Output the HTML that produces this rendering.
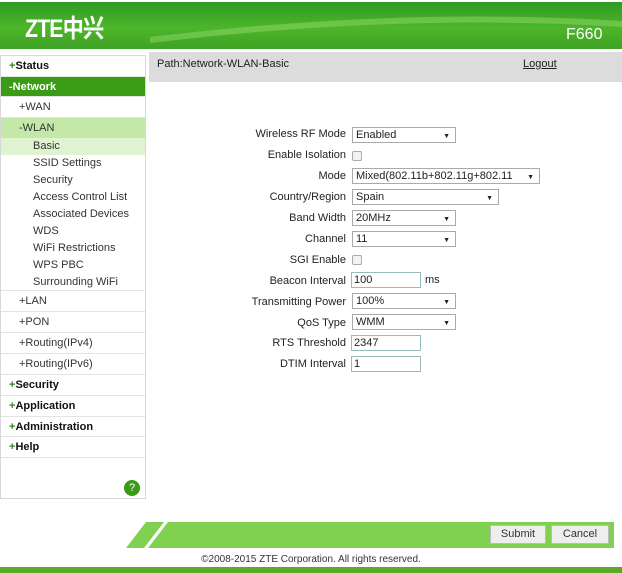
<!DOCTYPE html>
<html><head><style>
*{margin:0;padding:0;box-sizing:border-box}
body{width:622px;height:573px;background:#fff;font-family:"Liberation Sans",Arial,sans-serif;font-size:11px;color:#222;position:relative;overflow:hidden}
.a{position:absolute}
#hdr{left:0;top:2px;width:622px;height:47px;background:linear-gradient(180deg,#2f9a22 0%,#4db52a 55%,#3ea224 100%)}
#side{left:0;top:55px;width:146px;height:444px;border:1px solid #d8d8d8;background:#fff}
.it{position:absolute;left:0;width:144px;border-bottom:1px solid #e4e4e4;white-space:nowrap}
.l1{font-weight:bold;font-size:11px;padding-left:8px;color:#111}
.l1 b{color:#2c8a1a}
.l2{padding-left:18px;color:#333}
.l3{padding-left:32px;color:#333;border-bottom:none}
.lbl{position:absolute;right:276px;text-align:right;white-space:nowrap;color:#222}
.sel{position:absolute;left:352px;height:16px;border:1px solid #aaa;background:#fff;padding-left:3px;line-height:15px;font-size:11px}
.sel:after{content:"▼";position:absolute;right:5px;top:1px;font-size:7px}
.inp{position:absolute;left:351px;width:70px;height:16px;border:1px solid #9bb;padding-left:2px;line-height:14px}
.cb{position:absolute;left:352px;width:10px;height:10px;border:1px solid #aaa;border-radius:2px;background:#f4f4f4}
.btn{position:absolute;top:525px;height:19px;border:1px solid #bbb;background:#eee;text-align:center;line-height:17px;color:#333}
</style></head><body>
<div class="a" id="hdr">
<svg width="622" height="47" class="a" style="left:0;top:0"><path d="M150 38 Q400 8 622 22" stroke="#8fd86a" stroke-width="6" fill="none" opacity=".5"/></svg>
<div class="a" style="left:25px;top:7px;color:#fff;font-size:25px;font-weight:bold;font-family:'Liberation Sans','Noto Sans CJK SC',sans-serif;letter-spacing:-1px;transform:scaleX(.85);transform-origin:left">ZTE中兴</div>
<div class="a" style="left:566px;top:24px;color:#fff;font-size:16px">F660</div>
</div>
<div class="a" id="side">
<div class="it l1" style="top:0;height:21px;line-height:20px"><b>+</b>Status</div>
<div class="it l1" style="top:21px;height:20px;line-height:20px;background:#3a9b16;color:#fff">-Network</div>
<div class="it l2" style="top:41px;height:21px;line-height:20px">+WAN</div>
<div class="it l2" style="top:62px;height:20px;line-height:20px;background:#c4e8a8;border:none">-WLAN</div>
<div class="it l3" style="top:82px;height:17px;line-height:17px;background:#dff3d0">Basic</div>
<div class="it l3" style="top:99px;height:17px;line-height:17px">SSID Settings</div>
<div class="it l3" style="top:116px;height:17px;line-height:17px">Security</div>
<div class="it l3" style="top:133px;height:17px;line-height:17px">Access Control List</div>
<div class="it l3" style="top:150px;height:17px;line-height:17px">Associated Devices</div>
<div class="it l3" style="top:167px;height:17px;line-height:17px">WDS</div>
<div class="it l3" style="top:184px;height:17px;line-height:17px">WiFi Restrictions</div>
<div class="it l3" style="top:201px;height:17px;line-height:17px">WPS PBC</div>
<div class="it l3" style="top:218px;height:17px;line-height:17px;border-bottom:1px solid #e4e4e4">Surrounding WiFi</div>
<div class="it l2" style="top:235px;height:21px;line-height:20px">+LAN</div>
<div class="it l2" style="top:256px;height:21px;line-height:20px">+PON</div>
<div class="it l2" style="top:277px;height:21px;line-height:20px">+Routing(IPv4)</div>
<div class="it l2" style="top:298px;height:21px;line-height:20px">+Routing(IPv6)</div>
<div class="it l1" style="top:319px;height:21px;line-height:20px"><b>+</b>Security</div>
<div class="it l1" style="top:340px;height:21px;line-height:20px"><b>+</b>Application</div>
<div class="it l1" style="top:361px;height:20px;line-height:20px"><b>+</b>Administration</div>
<div class="it l1" style="top:381px;height:21px;line-height:20px"><b>+</b>Help</div>
<div class="a" style="left:123px;top:424px;width:16px;height:16px;border-radius:50%;background:#3a9a1a;color:#fff;text-align:center;line-height:16px;font-size:11px">?</div>
</div>
<div class="a" style="left:149px;top:52px;width:473px;height:30px;background:#dcdcdc"></div>
<div class="a" style="left:157px;top:58px">Path:Network-WLAN-Basic</div>
<div class="a" style="left:523px;top:58px;text-decoration:underline">Logout</div>

<div class="lbl" style="top:128px">Wireless RF Mode</div><div class="sel" style="top:127px;width:104px">Enabled</div>
<div class="lbl" style="top:149px">Enable Isolation</div><div class="cb" style="top:151px"></div>
<div class="lbl" style="top:170px">Mode</div><div class="sel" style="top:168px;width:188px">Mixed(802.11b+802.11g+802.11</div>
<div class="lbl" style="top:191px">Country/Region</div><div class="sel" style="top:189px;width:147px">Spain</div>
<div class="lbl" style="top:212px">Band Width</div><div class="sel" style="top:210px;width:104px">20MHz</div>
<div class="lbl" style="top:233px">Channel</div><div class="sel" style="top:231px;width:104px">11</div>
<div class="lbl" style="top:254px">SGI Enable</div><div class="cb" style="top:255px"></div>
<div class="lbl" style="top:275px">Beacon Interval</div><div class="inp" style="top:272px">100</div><div class="a" style="left:425px;top:274px">ms</div>
<div class="lbl" style="top:296px">Transmitting Power</div><div class="sel" style="top:293px;width:104px">100%</div>
<div class="lbl" style="top:317px">QoS Type</div><div class="sel" style="top:314px;width:104px">WMM</div>
<div class="lbl" style="top:337px">RTS Threshold</div><div class="inp" style="top:335px">2347</div>
<div class="lbl" style="top:358px">DTIM Interval</div><div class="inp" style="top:356px">1</div>

<svg class="a" style="left:120px;top:522px" width="494" height="26"><polygon points="6,26 26,0 494,0 494,26" fill="#7fd14f"/><polygon points="24,26 44,0 48,0 28,26" fill="#fff"/></svg>
<div class="btn" style="left:490px;width:56px">Submit</div>
<div class="btn" style="left:551px;width:58px">Cancel</div>
<div class="a" style="left:0;width:622px;top:554px;text-align:center;font-size:10px;color:#333">©2008-2015 ZTE Corporation. All rights reserved.</div>
<div class="a" style="left:0;top:567px;width:622px;height:6px;background:#5aaa2a"></div>
</body></html>
